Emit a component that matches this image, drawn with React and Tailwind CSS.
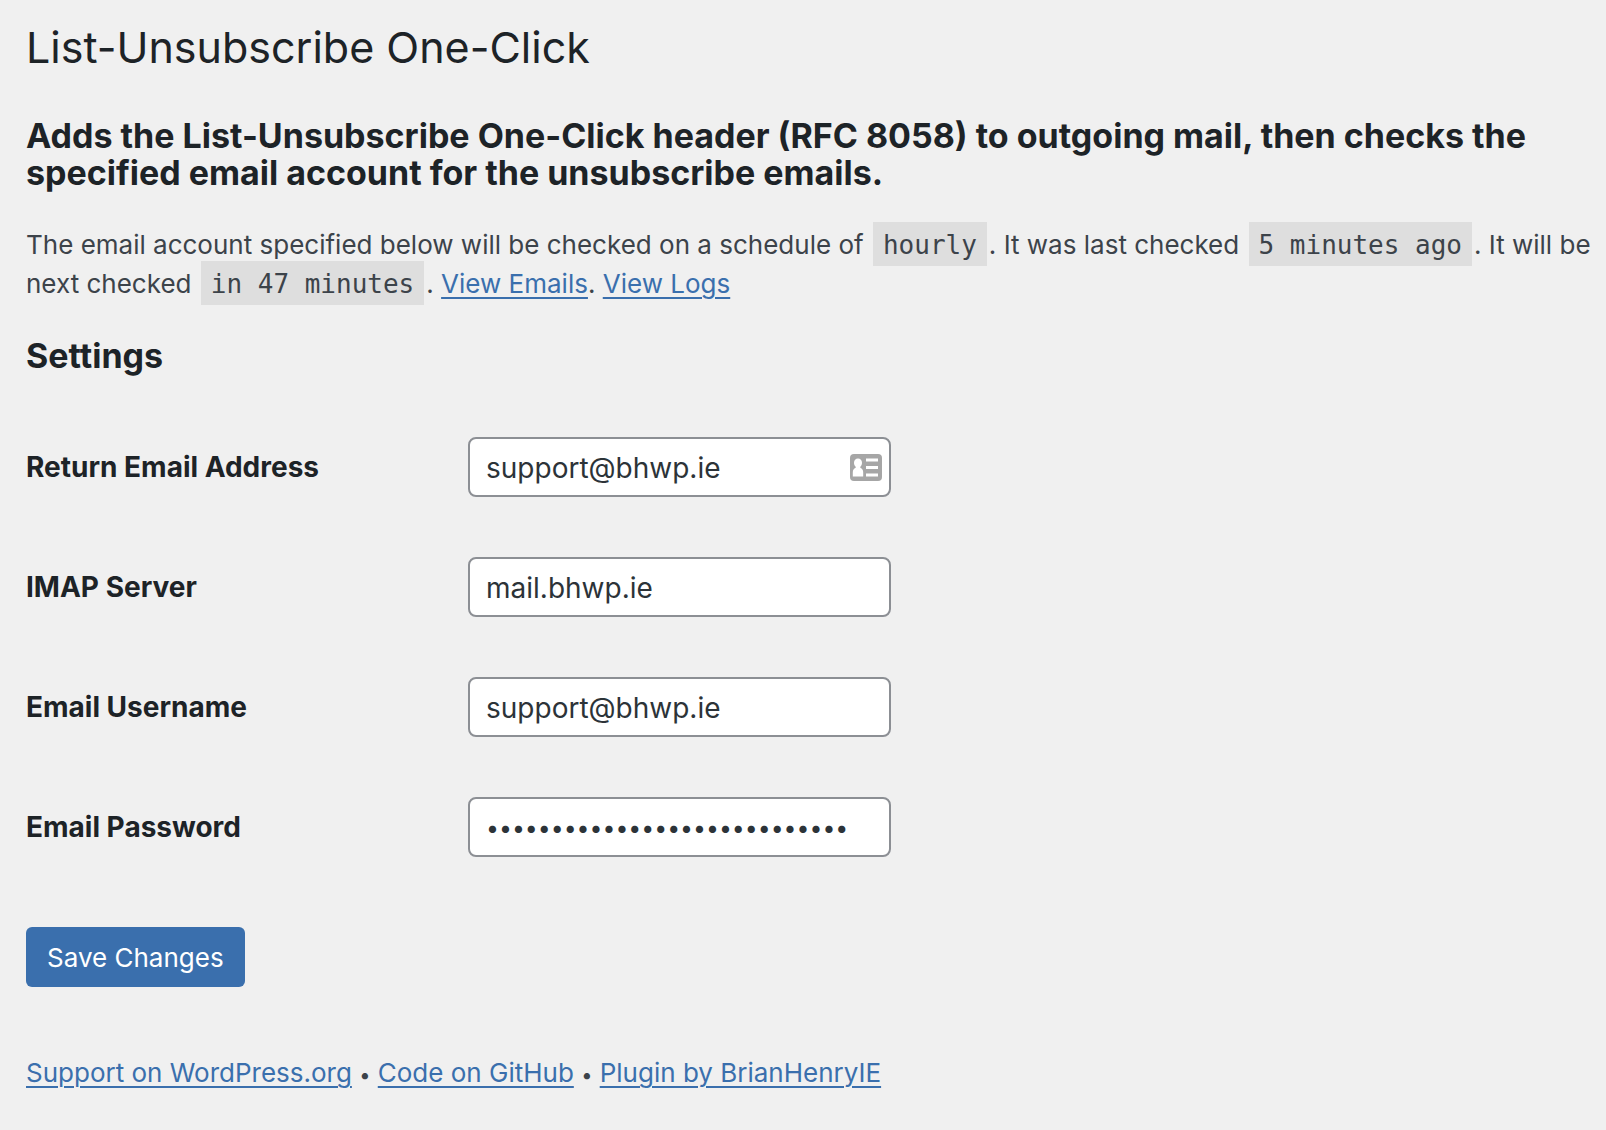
import React from "react";

const linkClass =
  "text-[#3a6fad] underline decoration-2 underline-offset-4 hover:text-[#135e96]";

const inputClass =
  "block h-[60px] w-full rounded-lg border-2 border-[#8c8f94] bg-white px-4 pt-0.5 text-[#2c3338] outline-none focus:border-[#2271b1]";

const fields = [
  { id: "return-email", label: "Return Email Address", type: "text", value: "support@bhwp.ie", card: true },
  { id: "imap-server", label: "IMAP Server", type: "text", value: "mail.bhwp.ie" },
  { id: "email-username", label: "Email Username", type: "text", value: "support@bhwp.ie" },
  { id: "email-password", label: "Email Password", type: "password", value: "abcdefghijklmnopqrstuvwxyz12" },
];

function ContactCardIcon() {
  return (
    <svg width="32" height="27" viewBox="0 0 32 27" aria-hidden="true">
      <rect width="32" height="27" rx="4" fill="#a6a6a6" />
      <path
        d="M8 4.500c2.400 0 4 1.800 4 4.300 0 1.700-.6 3.100-1.700 4v1c1.900.7 2.900 2.200 2.900 4.700v4H2.800v-4c0-2.500 1-4 2.900-4.700v-1C4.600 11.900 4 10.500 4 8.800c0-2.500 1.600-4.300 4-4.300z"
        fill="#fff"
      />
      <path d="M16 4.500h12v3H16zM16 12h12v3H16zM16 19.500h12v3H16z" fill="#fff" />
    </svg>
  );
}

function Code({ children }) {
  return (
    <code className="mx-0.5 bg-[#dedede] px-2.5 pt-2 pb-1.5 font-['DejaVu_Sans_Mono',monospace] text-[26px] leading-none">
      {children}
    </code>
  );
}

function Dot() {
  return <span className="text-xl leading-none">•</span>;
}

function Field({ id, label, type, value, card }) {
  return (
    <div className="grid grid-cols-[442px_423px] items-center">
      <label htmlFor={id} className="text-[28px] leading-9 font-bold text-[#1d2327]">
        {label}
      </label>
      <div className="relative">
        <input
          id={id}
          type={type}
          defaultValue={value}
          className={`${inputClass} ${type === "password" ? "text-[23px]" : "text-[28px]"}`}
        />
        {card && (
          <span className="absolute inset-y-0 right-[9px] flex items-center">
            <ContactCardIcon />
          </span>
        )}
      </div>
    </div>
  );
}

export default function App() {
  return (
    <main className="min-h-screen bg-[#f0f0f0] pt-[19px] pr-2.5 pb-10 pl-[26px] font-[Inter,sans-serif] text-[26px] leading-[39px] text-[#3c434a]">
      <h1 className="text-[43px] leading-[56px] font-normal text-[#1d2327]">List-Unsubscribe One-Click</h1>

      <h2 className="mt-[42px] text-[34px] leading-[37px] font-bold text-[#1d2327]">
        Adds the List-Unsubscribe One-Click header (RFC 8058) to outgoing mail, then checks the specified email
        account for the unsubscribe emails.
      </h2>

      <p className="mt-[34px]">
        The email account specified below will be checked on a schedule of <Code>hourly</Code>. It was last checked{" "}
        <Code>5 minutes ago</Code>. It will be next checked <Code>in 47 minutes</Code>.{" "}
        <a href="#emails" className={linkClass}>View Emails</a>.{" "}
        <a href="#logs" className={linkClass}>View Logs</a>
      </p>

      <form onSubmit={(e) => e.preventDefault()}>
        <h2 className="mt-[34px] text-[34px] leading-[37px] font-bold text-[#1d2327]">Settings</h2>

        <div className="mt-[63px] flex flex-col gap-[60px]">
          {fields.map((field) => (
            <Field key={field.id} {...field} />
          ))}
        </div>

        <button
          type="submit"
          className="mt-[70px] block h-[60px] rounded-md bg-[#3a6fad] px-[21px] text-[26px] text-white"
        >
          Save Changes
        </button>
      </form>

      <footer className="mt-[66px]">
        <a href="#support" className={linkClass}>Support on WordPress.org</a> <Dot />{" "}
        <a href="#code" className={linkClass}>Code on GitHub</a> <Dot />{" "}
        <a href="#author" className={linkClass}>Plugin by BrianHenryIE</a>
      </footer>
    </main>
  );
}
